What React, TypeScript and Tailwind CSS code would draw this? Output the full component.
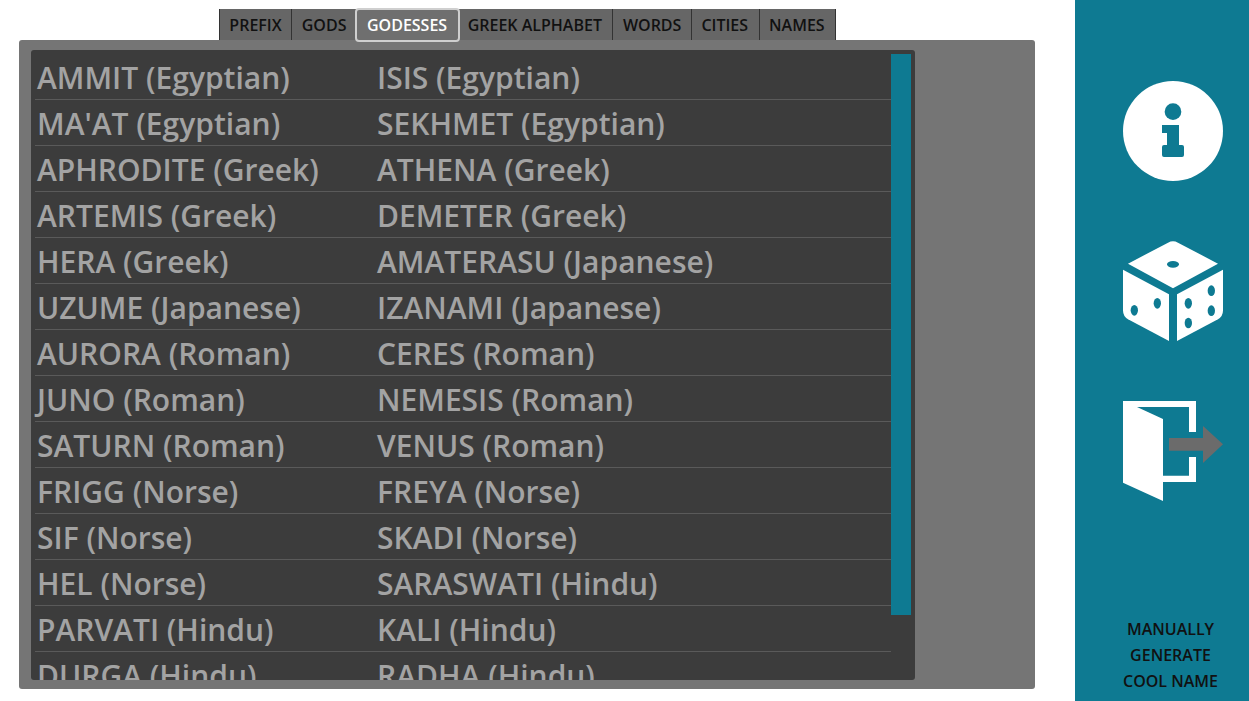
import React from 'react';

const rows = [
  ['AMMIT (Egyptian)', 'ISIS (Egyptian)'],
  ["MA'AT (Egyptian)", 'SEKHMET (Egyptian)'],
  ['APHRODITE (Greek)', 'ATHENA (Greek)'],
  ['ARTEMIS (Greek)', 'DEMETER (Greek)'],
  ['HERA (Greek)', 'AMATERASU (Japanese)'],
  ['UZUME (Japanese)', 'IZANAMI (Japanese)'],
  ['AURORA (Roman)', 'CERES (Roman)'],
  ['JUNO (Roman)', 'NEMESIS (Roman)'],
  ['SATURN (Roman)', 'VENUS (Roman)'],
  ['FRIGG (Norse)', 'FREYA (Norse)'],
  ['SIF (Norse)', 'SKADI (Norse)'],
  ['HEL (Norse)', 'SARASWATI (Hindu)'],
  ['PARVATI (Hindu)', 'KALI (Hindu)'],
  ['DURGA (Hindu)', 'RADHA (Hindu)'],
];

const tabs = [
  { name: 'PREFIX', padding: 'px-[9.5px]' },
  { name: 'GODS', padding: 'px-[9.5px]' },
  { name: 'GODESSES', padding: '' },
  { name: 'GREEK ALPHABET', padding: 'pl-[9.5px] pr-[10.5px]' },
  { name: 'WORDS', padding: 'px-[9.5px]' },
  { name: 'CITIES', padding: 'pl-[9.5px] pr-[10.5px]' },
  { name: 'NAMES', padding: 'pl-[9.5px] pr-[10.5px]' },
];

const InfoIcon = () => (
  <svg viewBox="69 63 300 300" className="w-[100px] h-[100px] block">
    <circle cx="219" cy="213" r="150" fill="#fff" />
    <circle cx="219" cy="155" r="25" fill="#0e7a92" />
    <path
      d="M186 195h51v60h9q6 0 6 6v24q0 6-6 6h-54q-6 0-6-6v-24q0-6 6-6h9v-36h-15z"
      fill="#0e7a92"
    />
  </svg>
);

const DiceIcon = () => (
  <svg viewBox="69 48 300 300" className="w-[100px] h-[100px] block">
    <path d="M84 116 L204 53 Q219 45 234 53 L354 116 L219 190 Z" fill="#fff" />
    <path d="M69 134 L207 208 V348 L84 283 Q69 274 69 256 Z" fill="#fff" />
    <path d="M369 134 L231 208 V348 L354 283 Q369 274 369 256 Z" fill="#fff" />
    <ellipse cx="219" cy="118" rx="18" ry="10" fill="#0e7a92" />
    <ellipse cx="103" cy="256" rx="11" ry="16" fill="#0e7a92" />
    <ellipse cx="172" cy="235" rx="11" ry="16" fill="#0e7a92" />
    <ellipse cx="265" cy="235" rx="11" ry="16" fill="#0e7a92" />
    <ellipse cx="265" cy="294" rx="11" ry="16" fill="#0e7a92" />
    <ellipse cx="334" cy="197" rx="11" ry="16" fill="#0e7a92" />
    <ellipse cx="334" cy="257" rx="11" ry="16" fill="#0e7a92" />
  </svg>
);

const ExitIcon = () => (
  <svg viewBox="69 48 300 300" className="w-[100px] h-[100px] block">
    <path
      d="M69 48 H288 V141 H267 V66 H111 L189 102 V272 H267 V216 H288 V291 H189 V348 L69 293 Z"
      fill="#fff"
    />
    <path d="M207 159 H309 V123 L369 178 L309 234 V197 H207 Z" fill="#6b6b6b" />
  </svg>
);

export default function App() {
  return (
    <div
      className="flex w-full h-[701px] overflow-hidden bg-white"
      style={{ fontFamily: '"Open Sans", sans-serif' }}
    >
      <div className="w-[1075px] shrink-0 pl-[19px] pr-[40px] pt-[9px]">
        <div className="flex justify-center h-[31px] relative z-10">
          {tabs.map((tab) =>
            tab.name === 'GODESSES' ? (
              <div
                key={tab.name}
                className="h-[34px] -mt-px -ml-px -mr-[3px] relative z-10 pl-[10px] pr-[11px] flex items-center bg-[#6f6f6f] border-2 border-[#cfcfcf] rounded-[4px] text-white text-base font-semibold"
              >
                {tab.name}
              </div>
            ) : (
              <div
                key={tab.name}
                className={`h-[31px] ${tab.padding} flex items-center bg-[#666666] border-x border-[#333333] text-[#111111] text-base font-semibold -mr-px`}
              >
                {tab.name}
              </div>
            )
          )}
        </div>
        <div className="bg-[#757575] rounded-[3px] h-[649px] pl-[12px] pt-[10px]">
          <div className="w-[884px] h-[630px] bg-[#3c3c3c] rounded-[3px] overflow-hidden flex pl-[4px] pt-[4px]">
            <div className="w-[856px] shrink-0">
              {rows.map(([a, b]) => (
                <div
                  key={a}
                  className="h-[46px] pt-[2px] flex items-center border-b border-[#5a5a5a] text-[30px] text-[#a3a3a3] font-semibold whitespace-nowrap"
                >
                  <span className="w-[340px] pl-[2px] shrink-0">{a}</span>
                  <span className="pl-[2px]">{b}</span>
                </div>
              ))}
            </div>
            <div className="w-[20px] h-[561px] bg-[#0e7a92] shrink-0" />
          </div>
        </div>
      </div>
      <div className="flex-1 bg-[#0e7a92] flex flex-col items-center pt-[81px] pl-[24px] pr-[2px]">
        <div className="flex flex-col gap-[60px] -ml-[24px] pl-[24px]">
          <InfoIcon />
          <DiceIcon />
          <ExitIcon />
        </div>
        <div className="mt-auto mb-[7px] -ml-[5px] text-center text-base leading-[26px] font-semibold text-[#111111]">
          <div>MANUALLY</div>
          <div>GENERATE</div>
          <div>COOL NAME</div>
        </div>
      </div>
    </div>
  );
}
